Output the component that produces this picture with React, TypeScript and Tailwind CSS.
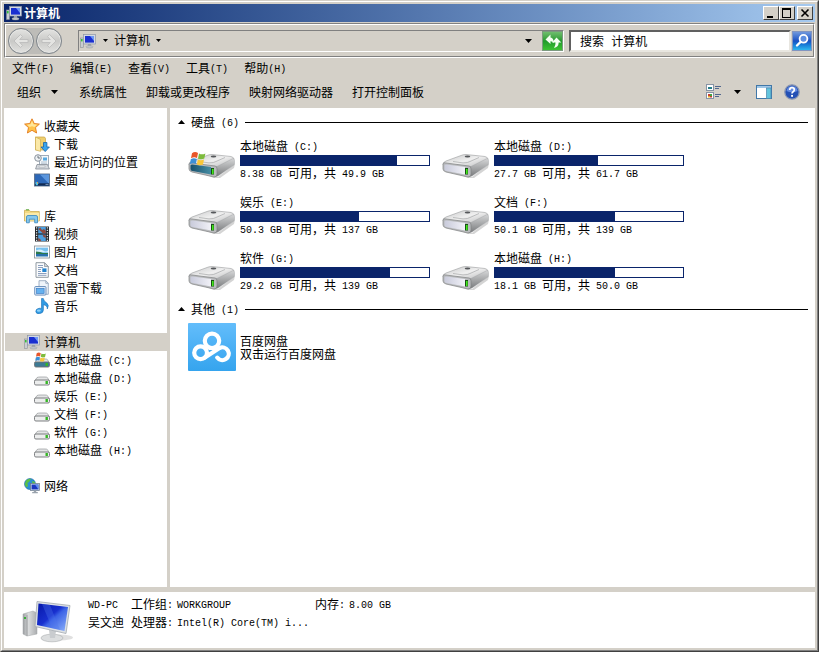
import React, { useState } from "react";

/* Latin runs sit on a 6px grid beside 12px Chinese characters. */
function T({ children }: { children: string }) {
  return (
    <span className="whitespace-pre">
      {children.split(/([\x20-\x7e]+)/).map((part, i) =>
        i % 2 ? (
          <span key={i} className="align-[1px] font-['Liberation_Mono',monospace] text-[10px] leading-none">
            {part}
          </span>
        ) : (
          part
        )
      )}
    </span>
  );
}

function Down({ className = "w-[7px] h-[4px]" }: { className?: string }) {
  return (
    <svg viewBox="0 0 7 4" className={`shrink-0 ${className}`} aria-hidden="true">
      <path d="M0 0h7L3.5 4z" />
    </svg>
  );
}

function ComputerIcon({ className }: { className: string }) {
  return (
    <svg viewBox="0 0 16 16" className={`shrink-0 ${className}`} aria-hidden="true">
      <rect x="0.5" y="5" width="3" height="9.5" fill="#c9cdd1" stroke="#8b9096" strokeWidth="0.6" />
      <rect x="1" y="6" width="1.6" height="2.4" fill="#35c03a" />
      <rect x="3.5" y="1.5" width="12" height="9.5" fill="#d3d9e2" stroke="#8d95a5" strokeWidth="0.7" />
      <rect x="5" y="3" width="9" height="6.6" fill="#1a2fd0" />
      <path d="M10 3h4v5z" fill="#6f97f5" />
      <path d="M8 11h3v2H8z" fill="#9aa0a8" />
      <ellipse cx="9.5" cy="13.8" rx="3.6" ry="1.2" fill="#c2c6cb" stroke="#8b9096" strokeWidth="0.4" />
    </svg>
  );
}

function FlagShape({ transform }: { transform: string }) {
  return (
    <g transform={transform}>
      <path d="M1 2.2C3 .8 5 .8 7 2L6 7C4 6 2.2 6 0 7.2z" fill="#e8562a" />
      <path d="M8 2.4c2 1.2 4 1.2 6.4 0L13.3 7.5c-2 1-4.2 1-6.3-.1z" fill="#7dbb3c" />
      <path d="M-.2 8.2c2-1.2 4-1.2 6-.1L4.8 13C3 12 1 12-1.2 13.2z" fill="#3c8fd6" />
      <path d="M6.8 8.5c2 1.1 4 1.1 6.2 0L12 13.4c-2 1-4.2 1-6.2 0z" fill="#f8c63a" />
    </g>
  );
}

function BigDrive({ system }: { system?: boolean }) {
  const id = system ? "sys" : "std";
  return (
    <svg viewBox="0 0 48 34" className="h-[34px] w-12 shrink-0" aria-hidden="true">
      <defs>
        <linearGradient id={`top-${id}`} x1="0" y1="0" x2="1" y2="1">
          <stop offset="0" stopColor="#c6c7c8" />
          <stop offset="0.5" stopColor="#efefef" />
          <stop offset="1" stopColor="#b9babb" />
        </linearGradient>
        <linearGradient id={`side-${id}`} x1="0" y1="0" x2="0" y2="1">
          <stop offset="0" stopColor="#d5d6d7" />
          <stop offset="1" stopColor="#77797b" />
        </linearGradient>
        <linearGradient id={`face-${id}`} x1="0" y1="0" x2="1" y2="0">
          <stop offset="0" stopColor={system ? "#17506c" : "#c9cbdb"} />
          <stop offset="1" stopColor={system ? "#468da4" : "#f1f1f7"} />
        </linearGradient>
      </defs>
      <path d="M7 24L30 30 47 17 46 21 32 31 26 31z" fill="#000" opacity="0.17" />
      <path d="M1 18Q1 15 4 14L19 8.500q2-1 5-1l19 2q3 1 3 2.500L30 20z" fill={`url(#top-${id})`} stroke="#9a9c9e" strokeWidth="0.6" />
      <path d="M28 20L45 11.500q1.500 0 1.500 2v3.500q0 1-2 2L30 29l-4 1z" fill={`url(#side-${id})`} stroke="#9a9c9e" strokeWidth="0.4" />
      <path d="M1 17q0-2 3-1l23 3q2 0 2 3v5q0 3-3 3L4 25q-3-1-3-3z" fill="#b9bbbd" stroke="#7f8183" strokeWidth="0.7" />
      <path d="M2.5 18.5q0-1 2-1L23 20v7.5L4.5 24q-2 0-2-2z" fill={`url(#face-${id})`} />
      <rect x="23" y="21" width="3" height="6.5" fill="#184f14" />
      <rect x="24" y="22" width="1.6" height="5" fill="#41e71b" />
      <ellipse cx="25.5" cy="9.5" rx="2.8" ry="0.9" fill="#55575a" />
      <path d="M11 14.500l10 1.400q5 0 7-1.400l9-4" fill="none" stroke="#aeb0b1" strokeWidth="0.8" />
      {system && <FlagShape transform="translate(3 4) scale(1)" />}
    </svg>
  );
}

const svgBox = "w-4 h-4 shrink-0";

function SmallIcon({ kind }: { kind: string }) {
  switch (kind) {
    case "star":
      return (
        <svg viewBox="0 0 16 16" className={svgBox} aria-hidden="true">
          <path d="M8 .8l2.2 4.7 5.2.6-3.9 3.5 1.1 5.4L8 12.3 3.4 15l1.1-5.4L.6 6.1l5.2-.6z" fill="#ffc34a" stroke="#e2791c" strokeWidth="0.9" />
          <path d="M8 2.8l1.4 3.4 3.6.5-2.6 2.3L8 8.3 5.6 9 3 6.7l3.6-.5z" fill="#ffe69a" />
        </svg>
      );
    case "download":
      return (
        <svg viewBox="0 0 16 16" className={svgBox} aria-hidden="true">
          <path d="M1.5 1h9l1 1.5V14h-10z" fill="#efcf6e" stroke="#c9a043" strokeWidth="0.7" />
          <path d="M1.5 1l5 2.5V15.4l-5-1.6z" fill="#fbe9a8" stroke="#cfae54" strokeWidth="0.7" />
          <path d="M9.5 6.5h3.4V11H15.4L11.2 15.6 7 11H9.5z" fill="#38a4ee" stroke="#1563a8" strokeWidth="0.8" />
        </svg>
      );
    case "recent":
      return (
        <svg viewBox="0 0 16 16" className={svgBox} aria-hidden="true">
          <rect x="5.5" y="1.5" width="9" height="10" fill="#f5f8fb" stroke="#8b98a8" strokeWidth="0.8" />
          <rect x="9" y="3.5" width="4" height="3" fill="#58a9e0" />
          <path d="M7 8h6M7 9.8h6" stroke="#9fb1c5" strokeWidth="0.8" />
          <path d="M3 10.5h10.5L15.4 15H1.6z" fill="#d5d9de" stroke="#858c94" strokeWidth="0.8" />
          <rect x="5" y="12" width="6" height="1.6" fill="#f8f8f8" stroke="#9da4ab" strokeWidth="0.5" />
          <circle cx="4" cy="4" r="3.3" fill="#edf1f4" stroke="#8b949e" strokeWidth="1" />
          <path d="M4 1.8V4h2" fill="none" stroke="#4e5862" strokeWidth="0.8" />
        </svg>
      );
    case "desktop":
      return (
        <svg viewBox="0 0 16 16" className={svgBox} aria-hidden="true">
          <rect x="0.5" y="2" width="15" height="12" fill="#2d68b8" stroke="#5b6f88" strokeWidth="0.9" />
          <path d="M6 2.5h9v9.3z" fill="#5b96dd" />
          <rect x="1" y="11.3" width="14" height="2.3" fill="#122a52" />
          <path d="M1.2 11l1.5-1.2L4.6 11l-1 2.3H2z" fill="#4ec2e8" />
          <path d="M3 10l1 .2v1.2H3z" fill="#f39a35" />
          <path d="M11.5 12.4h3" stroke="#9cb6d6" strokeWidth="0.8" />
        </svg>
      );
    case "library":
      return (
        <svg viewBox="0 0 16 16" className={svgBox} aria-hidden="true">
          <path d="M.5 2.3h5l1 1.2h8.8V13H.5z" fill="#f3d983" stroke="#c9a544" strokeWidth="0.7" />
          <path d="M2 1.8h3" stroke="#56a83e" />
          <path d="M1 5h14v7.6H1z" fill="#fbeaa9" />
          <path d="M2.5 14.8V9q0-1.5 1.5-1.5h8q1.5 0 1.5 1.5v5.8h-2.8v-3.6H5.3v3.6z" fill="#86c8ee" stroke="#3685bd" strokeWidth="0.8" />
        </svg>
      );
    case "video":
      return (
        <svg viewBox="0 0 16 16" className={svgBox} aria-hidden="true">
          <rect x="1" y="0.5" width="14" height="15" fill="#25282c" />
          <rect x="4.2" y="1" width="7.6" height="6.4" fill="#4c9fe0" />
          <rect x="4.2" y="8.6" width="7.6" height="6.4" fill="#4c9fe0" />
          <path d="M4.200 3l2-1.600L8 4l2-1 1.800 2v2.400H9L7 5.500zM8.500 8.600l1 2.400 2.300 1V9.500zM4.200 12l2 1 1 2h-3z" fill="#8d4a3e" />
          <path d="M2.6 1.2v14M13.4 1.2v14" stroke="#dfe4e8" strokeWidth="1.3" strokeDasharray="1.2 1.3" />
        </svg>
      );
    case "picture":
      return (
        <svg viewBox="0 0 16 16" className={svgBox} aria-hidden="true">
          <rect x="0.5" y="2" width="15" height="12" fill="#fff" stroke="#8f979e" strokeWidth="0.9" />
          <rect x="2" y="3.6" width="12" height="8.8" fill="#78c1ef" />
          <path d="M2 6.5q4-2 7 0t5 0v1.8H2z" fill="#d8effb" />
          <path d="M2 7.5l4 .4 3 1.1h5v1H2z" fill="#2c7a4d" />
          <path d="M2 10h12v2.4H2z" fill="#2970ac" />
        </svg>
      );
    case "document":
      return (
        <svg viewBox="0 0 16 16" className={svgBox} aria-hidden="true">
          <path d="M2 .7h8.5L14.3 4.5v10.8H2z" fill="#fbfcfd" stroke="#858e97" strokeWidth="0.9" />
          <path d="M10.5.7v3.8h3.8z" fill="#cfd6dc" stroke="#858e97" strokeWidth="0.7" />
          <path d="M4 3.5h5M4 5.5h5M4 7.5h3M4 9.5h3M4 11.5h8.5M4 13.3h8.5" stroke="#8095b5" strokeWidth="0.9" />
          <rect x="8.3" y="6.4" width="4.2" height="3.6" fill="#2384cf" />
        </svg>
      );
    case "thunder":
      return (
        <svg viewBox="0 0 16 16" className={svgBox} aria-hidden="true">
          <path d="M5 .7h6.8l2.5 2.6v11H5z" fill="#eef4fa" stroke="#8ca0b7" strokeWidth="0.8" />
          <path d="M11.8.7v2.6h2.5" fill="none" stroke="#8ca0b7" strokeWidth="0.8" />
          <rect x="0.7" y="6.5" width="11.3" height="8.6" rx="1" fill="#dbeafa" stroke="#6489b5" strokeWidth="0.9" />
          <rect x="2.6" y="8.4" width="7.5" height="5" fill="#65b1ef" stroke="#3d7fc5" strokeWidth="0.7" />
        </svg>
      );
    case "music":
      return (
        <svg viewBox="0 0 16 16" className={svgBox} aria-hidden="true">
          <path d="M7.5.5h1.8q.4 2.8 3.3 4.3 3 2.2.7 6.200.200-3.400-3.900-4.300v5.200q0 3.200-4 3.800-3.600.1-3.600-2.300 0-2.500 3.200-3.100 1.300-.2 2.500.2z" fill="#319be4" stroke="#1d6eb5" strokeWidth="0.6" />
          <ellipse cx="4.8" cy="12.6" rx="2" ry="1.2" fill="#8dd2fa" />
        </svg>
      );
    case "computer":
      return <ComputerIcon className="w-4 h-4" />;
    case "system":
    case "drive":
      return (
        <svg viewBox="0 0 16 16" className={svgBox} aria-hidden="true">
          <path d="M.6 11L3 7.6Q4 7 6 7h5q2 0 2.500.7L15.4 11z" fill="#e4e5e6" stroke="#96999b" strokeWidth="0.7" />
          <rect x="0.5" y="10" width="15" height="5" rx="1.4" fill={kind === "system" ? "#3d7a94" : "#eceded"} stroke="#6f7275" strokeWidth="0.9" />
          <rect x="11.5" y="11" width="2.4" height="3" fill="#35b624" />
          {kind === "system" && <FlagShape transform="translate(2 -.2) scale(.68)" />}
        </svg>
      );
    default:
      return (
        <svg viewBox="0 0 16 16" className={svgBox} aria-hidden="true">
          <circle cx="6" cy="6" r="5.5" fill="#2a8fd6" stroke="#1c66a3" strokeWidth="0.6" />
          <path d="M2 2.5Q5 0 7 1L5 4 3.5 5 4 8 2.5 9.5.8 6.5zM8 3l3 1v2H8.5z" fill="#5ac146" />
          <rect x="6.5" y="5.5" width="9" height="7" fill="#c8d5e6" stroke="#66758b" strokeWidth="0.7" />
          <rect x="7.6" y="6.6" width="6.8" height="4.8" fill="#1b35c0" />
          <path d="M11 6.6h3.4v4.8z" fill="#5f8df0" />
          <path d="M9.8 12.5h2.4v1.6h1.6v1.2H8.2v-1.2h1.6z" fill="#9aa3ad" />
        </svg>
      );
  }
}

const tree = [
  {
    icon: "star",
    label: "收藏夹",
    items: [
      { icon: "download", label: "下载" },
      { icon: "recent", label: "最近访问的位置" },
      { icon: "desktop", label: "桌面" },
    ],
  },
  {
    icon: "library",
    label: "库",
    items: [
      { icon: "video", label: "视频" },
      { icon: "picture", label: "图片" },
      { icon: "document", label: "文档" },
      { icon: "thunder", label: "迅雷下载" },
      { icon: "music", label: "音乐" },
    ],
  },
  {
    icon: "computer",
    label: "计算机",
    selected: true,
    items: [
      { icon: "system", label: "本地磁盘 (C:)" },
      { icon: "drive", label: "本地磁盘 (D:)" },
      { icon: "drive", label: "娱乐 (E:)" },
      { icon: "drive", label: "文档 (F:)" },
      { icon: "drive", label: "软件 (G:)" },
      { icon: "drive", label: "本地磁盘 (H:)" },
    ],
  },
  { icon: "network", label: "网络", items: [] },
];

const drives = [
  { name: "本地磁盘 (C:)", info: "8.38 GB 可用，共 49.9 GB", used: 83, system: true },
  { name: "本地磁盘 (D:)", info: "27.7 GB 可用，共 61.7 GB", used: 55 },
  { name: "娱乐 (E:)", info: "50.3 GB 可用，共 137 GB", used: 63 },
  { name: "文档 (F:)", info: "50.1 GB 可用，共 139 GB", used: 64 },
  { name: "软件 (G:)", info: "29.2 GB 可用，共 139 GB", used: 79 },
  { name: "本地磁盘 (H:)", info: "18.1 GB 可用，共 50.0 GB", used: 64 },
];

const raised =
  "flex items-center justify-center bg-[#d4d0c8] border border-t-white border-l-white border-r-[#404040] border-b-[#404040] h-[14px] w-4";

function TitleBar() {
  return (
    <header className="flex h-[18px] items-center bg-linear-to-r from-[#0a246a] to-[#a6caf0] pl-[2px] pr-[2px]">
      <ComputerIcon className="w-4 h-4" />
      <h1 className="ml-[2px] flex-1 text-xs font-bold text-white">计算机</h1>
      <button className={raised} aria-label="最小化">
        <svg viewBox="0 0 10 10" className="h-[10px] w-[10px]"><path d="M1 8h6v2H1z" /></svg>
      </button>
      <button className={raised} aria-label="最大化">
        <svg viewBox="0 0 10 10" className="h-[10px] w-[10px]"><path d="M0 0h9v10H0zM1 2v7h7V2z" fillRule="evenodd" /></svg>
      </button>
      <button className={`ml-[2px] ${raised}`} aria-label="关闭">
        <svg viewBox="0 0 10 10" className="h-[10px] w-[10px]"><path d="M1.5 1.5l7 7M8.5 1.5l-7 7" stroke="#000" strokeWidth="1.6" /></svg>
      </button>
    </header>
  );
}

function NavButton({ forward }: { forward?: boolean }) {
  return (
    <button
      aria-label={forward ? "前进" : "后退"}
      className="flex h-[26px] w-[26px] items-center justify-center rounded-full border border-[#7f858b] bg-linear-to-b from-[#e4e4e2] via-[#c9c9c7] to-[#e2e2e0] ring-1 ring-inset ring-[#e6e6e4]"
    >
      <svg viewBox="0 0 18 18" className="h-[18px] w-[18px]">
        <path
          d={forward ? "M16 9L9.500 2.500 7.500 4.600 10.300 7.500H2v3h8.300L7.500 13.400l2 2.100z" : "M2 9l6.500-6.500 2 2.100L7.700 7.500H16v3H7.700l2.800 2.900-2 2.100z"}
          fill="#e4e4e2"
          stroke="#bababa"
          strokeWidth="0.8"
        />
      </svg>
    </button>
  );
}

function AddressBand() {
  const [query, setQuery] = useState("搜索 计算机");
  return (
    <div className="mt-px border border-b-white border-l-[#808080] border-r-white border-t-[#808080]">
      <div className="flex h-[33px] items-center border border-b-[#808080] border-l-white border-r-[#808080] border-t-white pl-[2px] pr-px">
        <nav className="flex shrink-0 gap-[2px] rounded-full bg-[#bdbcb8]" aria-label="导航">
          <NavButton />
          <NavButton forward />
        </nav>
        <div className="ml-4 flex h-[22px] flex-1 items-center border border-b-white border-l-[#808080] border-r-white border-t-[#808080] pl-px">
          <ComputerIcon className="w-4 h-4" />
          <button className="ml-[7px]" aria-label="位置"><Down className="h-[3px] w-[5px]" /></button>
          <button className="ml-[6px] pb-[2px] text-xs">计算机</button>
          <button className="ml-[6px]" aria-label="子项"><Down className="h-[3px] w-[5px]" /></button>
          <button className="ml-auto mr-[10px]" aria-label="历史记录"><Down /></button>
          <button aria-label="刷新" className="flex h-5 w-[21px] items-center justify-center border border-[#7c9a80] bg-linear-to-b from-[#6fbd6e] via-[#209a2c] to-[#3cc332]">
            <svg viewBox="0 0 18 16" className="h-4 w-[18px]">
              <path d="M6.500 1.500L1.500 6.500l5 4.500V8.300q2.200.2 3.200 2Q10 5.200 6.500 4.600z" fill="#f5fff2" />
              <path d="M12.500 4.500l4.800 5h-2.600q-.2 4.700-4.700 5.500 1.800-2.300 1.500-5.500H8z" fill="#f5fff2" />
            </svg>
          </button>
        </div>
        <input
          aria-label="搜索"
          value={query}
          onChange={(e) => setQuery(e.target.value)}
          className="ml-[5px] h-[22px] w-[222px] border-2 border-b-[#e8e6e0] border-l-[#606060] border-r-[#e8e6e0] border-t-[#606060] bg-white pl-[9px] font-['Liberation_Mono','Noto_Sans_CJK_SC',monospace] text-xs outline-none"
        />
        <button aria-label="搜索计算机" className="ml-px flex h-5 w-5 items-center justify-center border border-[#8295c0] bg-linear-to-b from-[#7097dc] via-[#174fc4] to-[#2fb6ee]">
          <svg viewBox="0 0 18 18" className="h-[18px] w-[18px]">
            <circle cx="10.500" cy="6.800" r="3.900" fill="#5f8fe0" stroke="#fff" strokeWidth="1.800" />
            <path d="M7.500 10L4 13.500" stroke="#fff" strokeWidth="2.400" strokeLinecap="round" />
          </svg>
        </button>
      </div>
    </div>
  );
}

function Toolbars() {
  return (
    <>
      <nav className="flex h-5 items-center gap-4 pl-2" aria-label="菜单">
        {["文件(F)", "编辑(E)", "查看(V)", "工具(T)", "帮助(H)"].map((m) => (
          <button key={m}><T>{m}</T></button>
        ))}
      </nav>
      <div className="flex h-[30px] items-center gap-[19px] pb-[2px] pl-[13px] pr-[15px]">
        <button className="mr-[2px] flex items-center gap-[10px]">组织<Down /></button>
        {["系统属性", "卸载或更改程序", "映射网络驱动器", "打开控制面板"].map((m) => (
          <button key={m}>{m}</button>
        ))}
        <div className="ml-auto flex items-center">
          <button aria-label="更改视图">
            <svg viewBox="0 0 16 16" className="h-4 w-4">
              <rect x="0.500" y="0.500" width="7" height="6" fill="#fff" stroke="#8793a5" />
              <path d="M2 3h4v2H2z" fill="#267f8c" />
              <rect x="0.500" y="8.500" width="7" height="6" fill="#fff" stroke="#8793a5" />
              <path d="M2 10h2v2H2zM4 12h2v1.500H4z" fill="#c43e32" />
              <path d="M4 10h2v2H4z" fill="#3fa43e" />
              <path d="M2 12h2v1.500H2z" fill="#e8b52d" />
              <path d="M9 2.500H15M9 4.500H13M9 10.500H15M9 12.500H13" stroke="#52678e" />
            </svg>
          </button>
          <button className="ml-3" aria-label="更多选项"><Down /></button>
          <button className="ml-[15px]" aria-label="预览窗格">
            <svg viewBox="0 0 16 16" className="h-4 w-4">
              <rect x="0.500" y="1.500" width="15" height="13" fill="#fff" stroke="#4177a8" />
              <path d="M1 2h14v2H1z" fill="#9fc6e6" />
              <rect x="10.500" y="4" width="4.500" height="10.500" fill="#62c4dd" stroke="#4a86ad" strokeWidth="0.700" />
            </svg>
          </button>
          <button className="ml-3" aria-label="帮助">
            <svg viewBox="0 0 16 16" className="h-4 w-4">
              <circle cx="8" cy="8" r="7.200" fill="#2450b5" stroke="#8996b2" strokeWidth="1.300" />
              <path d="M2.500 7Q3 2.500 8 2.300T13.500 7Q8 9.500 2.500 7" fill="#648be0" />
              <path d="M5.700 6Q5.800 3.700 8 3.700t2.300 2q0 1.300-1.200 2Q8 8.400 8 9.600" fill="none" stroke="#fff" strokeWidth="1.700" />
              <rect x="7.100" y="10.900" width="1.900" height="1.900" fill="#fff" />
            </svg>
          </button>
        </div>
      </div>
    </>
  );
}

function Sidebar() {
  return (
    <aside className="w-[163px] shrink-0 bg-white pl-px pt-[9px]">
      <ul className="flex flex-col gap-[18px]">
        {tree.map((g) => (
          <li key={g.label}>
            <a href="#" className={`flex h-[18px] items-center gap-1 pl-[19px] ${g.selected ? "bg-[#d4d0c8]" : ""}`}>
              <SmallIcon kind={g.icon} />
              {g.label}
            </a>
            <ul>
              {g.items.map((it) => (
                <li key={it.label}>
                  <a href="#" className="flex h-[18px] items-center gap-1 pl-[29px]">
                    <SmallIcon kind={it.icon} />
                    <T>{it.label}</T>
                  </a>
                </li>
              ))}
            </ul>
          </li>
        ))}
      </ul>
    </aside>
  );
}

function GroupHeader({ children }: { children: string }) {
  return (
    <h2 className="flex h-[18px] items-center pl-2 pr-[7px]">
      <svg viewBox="0 0 7 4" className="h-1 w-[7px]" aria-hidden="true"><path d="M0 4h7L3.500 0z" /></svg>
      <span className="ml-[6px]"><T>{children}</T></span>
      <span className="ml-[6px] mt-px h-px flex-1 bg-black" />
    </h2>
  );
}

function Content() {
  return (
    <main className="flex-1 bg-white pt-[5px]">
      <GroupHeader>硬盘 (6)</GroupHeader>
      <ul className="flex flex-wrap pl-[18px] pt-2">
        {drives.map((d) => (
          <li key={d.name} className="flex h-14 w-[254px] gap-1">
            <div className="pt-2"><BigDrive system={d.system} /></div>
            <div className="w-[190px]">
              <div className="h-4 leading-[14px]"><T>{d.name}</T></div>
              <div role="progressbar" aria-valuenow={d.used} aria-label={d.name} className="h-[11px] border border-[#0a246a] bg-white">
                <div className="h-full bg-[#0a246a]" style={{ width: `${d.used}%` }} />
              </div>
              <div className="h-4 leading-[14px]"><T>{d.info}</T></div>
            </div>
          </li>
        ))}
      </ul>
      <div className="-mt-[7px]">
        <GroupHeader>其他 (1)</GroupHeader>
      </div>
      <a href="#" className="mt-[5px] flex items-center gap-1 pl-[18px]">
        <svg viewBox="0 0 48 48" className="h-12 w-12" aria-hidden="true">
          <defs>
            <linearGradient id="pan" x1="0" y1="0" x2="0" y2="1">
              <stop offset="0" stopColor="#63bdfb" />
              <stop offset="1" stopColor="#35a4ee" />
            </linearGradient>
          </defs>
          <rect width="48" height="48" rx="1" fill="url(#pan)" />
          <g fill="none" stroke="#fff" strokeWidth="4.200" strokeLinecap="round">
            <circle cx="24" cy="17.800" r="7.200" />
            <circle cx="12.600" cy="29.800" r="6.400" />
            <path d="M16.500 34.800L31.500 25a6.400 6.400 0 1 1-2.300 9.600" />
          </g>
        </svg>
        <span className="flex flex-col leading-[13px]">
          <span>百度网盘</span>
          <span>双击运行百度网盘</span>
        </span>
      </a>
    </main>
  );
}

function Details() {
  return (
    <footer className="mt-[5px] flex h-14 items-start bg-white pl-[18px] pt-[3px]">
      <svg viewBox="0 0 52 48" className="h-12 w-[52px] shrink-0" aria-hidden="true">
        <defs>
          <linearGradient id="screen" x1="0" y1="0" x2="1" y2="1">
            <stop offset="0" stopColor="#0718a8" />
            <stop offset="0.450" stopColor="#1830cf" />
            <stop offset="0.550" stopColor="#3c63e6" />
            <stop offset="1" stopColor="#8fb4fa" />
          </linearGradient>
          <linearGradient id="tower" x1="0" y1="0" x2="1" y2="0">
            <stop offset="0" stopColor="#9c9fa2" />
            <stop offset="0.400" stopColor="#dadcdd" />
            <stop offset="1" stopColor="#aaacae" />
          </linearGradient>
        </defs>
        <ellipse cx="38" cy="42.500" rx="13" ry="3" fill="#000" opacity="0.120" />
        <path d="M1 19l10-3 4 2v21L5 41l-4-2z" fill="url(#tower)" stroke="#a3a6a9" strokeWidth="0.500" />
        <path d="M5 20v21" stroke="#8c8f92" strokeWidth="0.700" />
        <rect x="2" y="22" width="2" height="2" fill="#3aae39" />
        <ellipse cx="30" cy="43" rx="11" ry="3.800" fill="#dcdedf" stroke="#a9acae" strokeWidth="0.600" />
        <path d="M27 35l7 1-1 7h-5z" fill="#c9cccf" />
        <path d="M15 6.500l33 4-4 28-31-7z" fill="#dde1e5" stroke="#a3a9b0" strokeWidth="0.800" />
        <path d="M16.500 8.500l29.500 3.500-3.500 24L15 30z" fill="url(#screen)" />
        <path d="M20 9l8 1 10 25-8-2z" fill="#4d75ea" opacity="0.350" />
      </svg>
      <dl className="ml-[14px] grid grid-cols-[43px_46px_138px_34px_auto] leading-[18px]">
        <dd><T>WD-PC</T></dd>
        <dt><T>工作组:</T></dt>
        <dd><T>WORKGROUP</T></dd>
        <dt><T>内存:</T></dt>
        <dd><T>8.00 GB</T></dd>
        <dd>吴文迪</dd>
        <dt><T>处理器:</T></dt>
        <dd><T>Intel(R) Core(TM) i...</T></dd>
      </dl>
    </footer>
  );
}

export default function App() {
  return (
    <div className="min-h-screen border border-b-[#404040] border-l-[#d4d0c8] border-r-[#404040] border-t-[#d4d0c8] font-['Noto_Sans_CJK_SC',sans-serif] text-xs text-black flex flex-col">
      <div className="flex flex-1 flex-col border border-b-[#808080] border-l-white border-r-[#808080] border-t-white bg-[#d4d0c8] p-[2px]">
        <TitleBar />
        <AddressBand />
        <Toolbars />
        <div className="flex flex-1 gap-[3px]">
          <Sidebar />
          <Content />
        </div>
        <Details />
      </div>
    </div>
  );
}
